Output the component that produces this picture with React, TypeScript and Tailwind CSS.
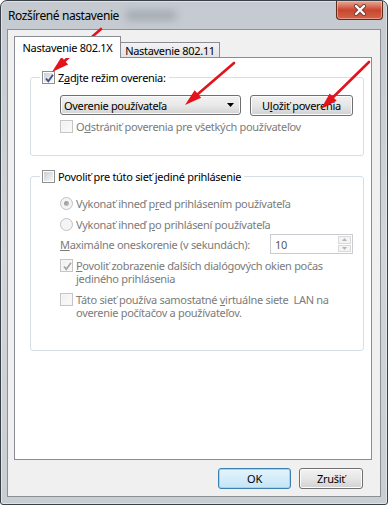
import React from 'react';

type Seg = { x1: number; y1: number; x2: number; y2: number };

// red annotation arrows drawn over the dialog
const arrows: Seg[] = [
  { x1: 101, y1: 29, x2: 52, y2: 72 },
  { x1: 234, y1: 63, x2: 185, y2: 105 },
  { x1: 369, y1: 62, x2: 321, y2: 109 },
];

function Arrow({ x1, y1, x2, y2 }: Seg) {
  const dx = x2 - x1;
  const dy = y2 - y1;
  const len = Math.hypot(dx, dy);
  const ux = dx / len;
  const uy = dy / len;
  const headLen = 17;
  const half = 5;
  const bx = x2 - ux * headLen;
  const by = y2 - uy * headLen;
  const px = -uy * half;
  const py = ux * half;
  return (
    <g>
      <line x1={x1} y1={y1} x2={bx + ux * 3} y2={by + uy * 3} stroke="#e3121b" strokeWidth={2.6} strokeLinecap="round" />
      <polygon points={`${x2},${y2} ${bx + px},${by + py} ${bx - px},${by - py}`} fill="#e3121b" />
    </g>
  );
}

function CheckBox({ checked, disabled }: { checked?: boolean; disabled?: boolean }) {
  return (
    <span
      className={`relative flex h-[13px] w-[13px] shrink-0 items-center justify-center border ${
        disabled ? 'border-[#c5c5c5] bg-[#f7f7f7]' : 'border-[#8e8f8f] bg-white'
      }`}
    >
      <span
        className={`h-[9px] w-[9px] bg-gradient-to-br ${
          disabled ? 'from-[#f0f0f0] to-[#fbfbfb]' : 'from-[#cbcfd5] to-[#f7f7f7]'
        }`}
      />
      {checked && (
        <svg className="absolute left-[1px] top-[1px]" width="11" height="11" viewBox="0 0 11 11">
          <path d="M2 5.5 L4.3 8.2 L9 1.8" fill="none" stroke={disabled ? '#a6a6a6' : '#3c4f86'} strokeWidth="1.8" />
        </svg>
      )}
    </span>
  );
}

function Radio({ checked }: { checked?: boolean }) {
  return (
    <span className="flex h-[13px] w-[13px] shrink-0 items-center justify-center rounded-full border border-[#c2c2c2] bg-[#f4f4f4]">
      {checked && <span className="h-[5px] w-[5px] rounded-full bg-gradient-to-br from-[#8f8f8f] to-[#c4c4c4]" />}
    </span>
  );
}

function WinButton({ children, w, primary }: { children: React.ReactNode; w: string; primary?: boolean }) {
  return (
    <div
      className={`${w} flex h-[21px] items-center justify-center rounded-[3px] border ${
        primary
          ? 'border-[#3c7fb1] bg-gradient-to-b from-[#e5f4fc] to-[#c4e5f6] shadow-[inset_0_0_0_1px_#9fd6f3]'
          : 'border-[#707070] bg-gradient-to-b from-[#f2f2f2] via-[#e6e6e6] to-[#d1d1d1] shadow-[inset_0_0_0_1px_#fcfcfc]'
      }`}
    >
      {children}
    </div>
  );
}

const U = ({ c }: { c: string }) => <span className="underline underline-offset-[1px]">{c}</span>;

export default function App() {
  return (
    <div className="relative h-[505px] w-[388px] overflow-hidden font-['Noto_Sans',sans-serif] text-[11px] leading-[13px] tracking-[-0.3px] text-black">
      <div className="flex h-full flex-col rounded-t-[7px] rounded-b-[3px] border border-[#3a4047] bg-gradient-to-b from-[#c4cad0] via-[#d2d6da] to-[#c9ced3] shadow-[inset_0_0_0_1px_rgba(255,255,255,0.45)]">
        {/* title bar */}
        <div className="relative flex h-[28px] shrink-0 items-start justify-between pl-[7px] pr-[4px]">
          <span className="pointer-events-none absolute left-[125px] top-[10px] h-[9px] w-[50px] bg-[#7d848b] opacity-50 blur-[4px]" />
          <span className="relative mt-[7px] text-[12px] leading-[15px] tracking-[-0.4px] text-black">Rozšírené nastavenie</span>
          <div className="flex h-[19px] w-[47px] items-center justify-center rounded-b-[4px] border border-t-0 border-[#5e2b22] bg-gradient-to-b from-[#e9a795] via-[#c9452c] to-[#d2654b] shadow-[inset_0_0_0_1px_rgba(255,210,200,0.5)]">
            <svg width="14" height="12" viewBox="0 0 14 12">
              <path d="M3 2 L11 10 M11 2 L3 10" stroke="#6b3a33" strokeWidth="4" strokeLinecap="round" />
              <path d="M3 2 L11 10 M11 2 L3 10" stroke="#ffffff" strokeWidth="2.4" strokeLinecap="round" />
            </svg>
          </div>
        </div>

        {/* client area */}
        <div className="mx-[6px] mb-[7px] flex flex-1 flex-col border border-[#8a9096] bg-[#f0f0f0]">
          {/* tabs */}
          <div className="ml-[6px] flex h-[27px] items-end pt-[6px]">
            <div className="relative z-10 -mb-px flex h-[22px] w-[107px] items-center justify-center border border-b-0 border-[#898c95] bg-white">
              Nastavenie 802.1X
            </div>
            <div className="-ml-px flex h-[15px] w-[100px] items-center justify-center border border-b-0 border-[#898c95] bg-gradient-to-b from-[#f3f3f3] to-[#e3e3e3]">
              Nastavenie 802.11
            </div>
          </div>

          {/* panel */}
          <div className="ml-[6px] mr-[8px] flex h-[403px] flex-col border border-[#898c95] bg-white">
            <fieldset className="ml-[15px] mr-[7px] mt-[13px] rounded-[3px] border border-[#d5dfe5] pb-[22px] pl-[29px] pr-[10px]">
              <legend className="-ml-[20px] flex h-[13px] items-center gap-[3px] pl-[2px] pr-[3px]">
                <CheckBox checked />
                <span>
                  Z<U c="a" />djte režim overenia:
                </span>
              </legend>
              <div className="mt-[11px] flex items-start">
                <div className="flex h-[20px] w-[181px] items-center justify-between rounded-[3px] border border-[#707070] bg-gradient-to-b from-[#f2f2f2] via-[#e9e9e9] to-[#d3d3d3] pl-[3px] pr-[6px] shadow-[inset_0_0_0_1px_#fbfbfb]">
                  <span>Overenie používateľa</span>
                  <svg width="7" height="4" viewBox="0 0 7 4">
                    <path d="M0 0 H7 L3.5 4 Z" fill="#000" />
                  </svg>
                </div>
                <div className="ml-auto">
                  <WinButton w="w-[103px]">
                    <span>
                      U<U c="l" />ožiť poverenia
                    </span>
                  </WinButton>
                </div>
              </div>
              <div className="mt-[4px] flex items-center gap-[3px] text-[#7b7b7b]">
                <CheckBox disabled />
                <span>
                  O<U c="d" />strániť poverenia pre všetkých používateľov
                </span>
              </div>
            </fieldset>

            <fieldset className="ml-[15px] mr-[7px] mt-[14px] rounded-[3px] border border-[#d5dfe5] pb-[31px] pl-[29px] pr-[10px]">
              <legend className="-ml-[20px] flex h-[13px] items-center gap-[3px] pl-[2px] pr-[3px]">
                <CheckBox />
                <span>
                  Povoliť pre túto sieť <U c="j" />ediné prihlásenie
                </span>
              </legend>
              <div className="flex flex-col text-[#7b7b7b]">
                <div className="mt-[13px] flex h-[14px] items-center gap-[3px]">
                  <Radio checked />
                  <span>
                    Vykonať ihneď p<U c="r" />ed prihlásením používateľa
                  </span>
                </div>
                <div className="mt-[7px] flex h-[14px] items-center gap-[3px]">
                  <Radio />
                  <span>
                    Vykonať ihneď <U c="p" />o prihlásení používateľa
                  </span>
                </div>
                <div className="mt-[3px] flex h-[20px] items-center justify-between">
                  <span>
                    <U c="M" />aximálne oneskorenie (v sekundách):
                  </span>
                  <div className="flex h-[20px] w-[83px] items-center border border-[#c9cdd1] bg-white pl-[4px] text-[#5a5a5a]">
                    <span className="flex-1">10</span>
                    <div className="flex h-full w-[15px] flex-col gap-px p-px">
                      <div className="flex flex-1 items-center justify-center border border-[#d9d9d9] bg-[#f4f4f4]">
                        <svg width="5" height="3" viewBox="0 0 5 3"><path d="M0 3 L2.5 0 L5 3 Z" fill="#b5b5b5" /></svg>
                      </div>
                      <div className="flex flex-1 items-center justify-center border border-[#d9d9d9] bg-[#f4f4f4]">
                        <svg width="5" height="3" viewBox="0 0 5 3"><path d="M0 0 H5 L2.5 3 Z" fill="#b5b5b5" /></svg>
                      </div>
                    </div>
                  </div>
                </div>
                <div className="mt-[5px] flex items-start gap-[3px]">
                  <CheckBox checked disabled />
                  <span>
                    <U c="P" />ovoliť zobrazenie ďalších dialógových okien počas
                    <br />
                    jediného prihlásenia
                  </span>
                </div>
                <div className="mt-[8px] flex items-start gap-[3px]">
                  <CheckBox disabled />
                  <span>
                    Táto sieť používa samostatné <U c="v" />irtuálne siete&nbsp; LAN na
                    <br />
                    overenie počítačov a používateľov.
                  </span>
                </div>
              </div>
            </fieldset>
          </div>

          {/* dialog buttons */}
          <div className="mr-[17px] mt-[8px] flex justify-end gap-[8px]">
            <WinButton w="w-[73px]" primary>
              OK
            </WinButton>
            <WinButton w="w-[64px]">Zrušiť</WinButton>
          </div>
        </div>
      </div>

      <svg className="pointer-events-none absolute inset-0" width="388" height="505" viewBox="0 0 388 505">
        {arrows.map((a, i) => (
          <Arrow key={i} {...a} />
        ))}
      </svg>
    </div>
  );
}
